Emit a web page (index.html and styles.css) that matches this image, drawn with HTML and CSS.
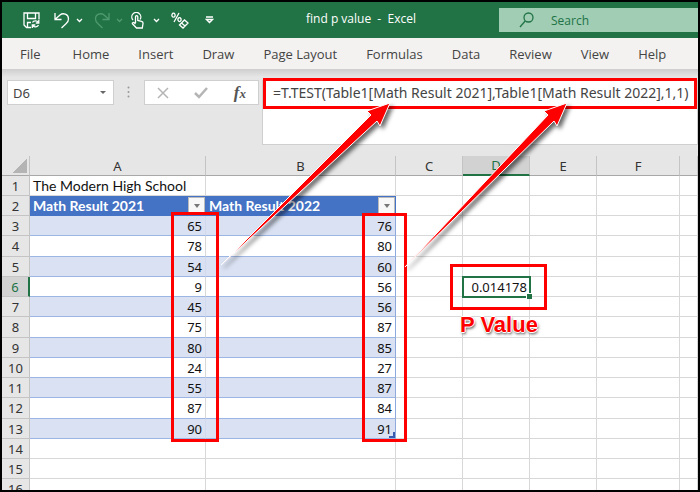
FILE: index.html
```html
<!DOCTYPE html>
<html lang="en">
  <head>
    <meta charset="UTF-8" />
    <meta name="viewport" content="width=device-width, initial-scale=1.0" />
    <title>find p value - Excel</title>
    <link rel="stylesheet" href="styles.css">
  </head>
  <body>
    <div class="window">
      <header class="titlebar">
        <div class="quick">
          <button aria-label="Save">
            <svg width="17" height="17" viewBox="0 0 17 17"><path d="M8 15.500H3.500L1 13V1H16V7.500M4.500 1V6.500H12.500V1M4.500 15V10.500H8M9.500 10.500C10.500 8.500 14 8.300 15.500 10.500M15.800 8V11H12.800M15.500 13C14.500 15.200 11.500 15.600 9.600 13.500M9.300 16V13H12.300"/></svg>
          </button>
          <button class="split" aria-label="Undo">
            <svg width="16" height="17" viewBox="0 0 16 17"><path d="M1 1V7.500H7.500M1.200 7.300L6 3C9 .5 14.500 2 14.500 7C14.500 9 13.500 10.500 12 11.800L7.500 16"/></svg>
            <svg width="7" height="5" viewBox="0 0 7 5"><path d="M1 1L3.500 3.500L6 1"/></svg>
          </button>
          <button class="split off" aria-label="Redo">
            <svg width="16" height="17" viewBox="0 0 16 17"><path d="M15 1V7.500H8.500M14.800 7.300L10 3C7 .5 1.500 2 1.500 7C1.500 9 2.500 10.500 4 11.800L8.500 16"/></svg>
            <svg width="7" height="5" viewBox="0 0 7 5"><path d="M1 1L3.500 3.500L6 1"/></svg>
          </button>
          <button class="split touch" aria-label="Touch mode">
            <svg width="13" height="17" viewBox="0 0 13 17"><path d="M2 8A4.500 4.500 0 1 1 9 7.500M4.500 11V4.800C4.500 3.300 6.800 3.300 6.800 4.800V8.500L10.500 9.300C11.800 9.600 12.200 10.300 12 11.500L11.300 16H5.500L1.500 11.800C1 11 2.200 10 3 10.600L4.500 12"/></svg>
            <svg width="7" height="5" viewBox="0 0 7 5"><path d="M1 1L3.500 3.500L6 1"/></svg>
          </button>
          <button class="percent" aria-label="Clear format">
            <svg width="18" height="17" viewBox="0 0 18 17"><path d="M8 1L3 10M2.500 1.200A1.600 2 0 1 0 2.510 1.200M8.500 5.600A1.600 2 0 1 0 8.510 5.600M8.500 13L13.500 8L17 11L12 16ZM10.500 11L14 14"/></svg>
          </button>
          <button class="more" aria-label="Customize">
            <svg width="9" height="8" viewBox="0 0 9 8"><path d="M1 1H8M1.500 3.500H7.500L4.500 6.500Z"/></svg>
          </button>
        </div>
        <div class="title">find p value&nbsp; -&nbsp; Excel</div>
        <label class="search">
          <svg width="15" height="16" viewBox="0 0 15 16"><circle cx="9.500" cy="5.500" r="4.500"/><path d="M6.200 9L1 15"/></svg>
          <input type="text" placeholder="Search" aria-label="Search" />
        </label>
      </header>

      <nav class="tabs">
        <a class="file" href="#">File</a>
        <a href="#">Home</a>
        <a href="#">Insert</a>
        <a href="#">Draw</a>
        <a href="#">Page Layout</a>
        <a href="#">Formulas</a>
        <a href="#">Data</a>
        <a href="#">Review</a>
        <a href="#">View</a>
        <a href="#">Help</a>
      </nav>

      <div class="formula-bar">
        <div class="name-box">
          <input type="text" value="D6" aria-label="Name box" />
          <span class="caret"></span>
        </div>
        <svg class="dots" width="3" height="12" viewBox="0 0 3 12"><circle cx="1.500" cy="1.500" r="1"/><circle cx="1.500" cy="6" r="1"/><circle cx="1.500" cy="10.500" r="1"/></svg>
        <div class="fx-buttons">
          <button aria-label="Cancel"><svg width="12" height="12" viewBox="0 0 12 12"><path d="M1 1L11 11M11 1L1 11"/></svg></button>
          <button aria-label="Enter"><svg class="tick" width="14" height="12" viewBox="0 0 14 12"><path d="M1 6L5 10L13 1"/></svg></button>
          <button class="fx" aria-label="Insert function">f<small>x</small></button>
        </div>
        <textarea class="formula" aria-label="Formula" spellcheck="false">=T.TEST(Table1[Math Result 2021],Table1[Math Result 2022],1,1)</textarea>
      </div>

      <table class="sheet">
        <colgroup>
          <col class="w-num"><col class="w-a"><col class="w-b"><col class="w-c"><col class="w-c"><col class="w-c"><col class="w-f"><col>
        </colgroup>
        <thead>
          <tr><th class="corner"></th><th>A</th><th>B</th><th>C</th><th class="active">D</th><th>E</th><th>F</th><th></th></tr>
        </thead>
        <tbody>
          <tr><th>1</th><td class="text">The Modern High School</td><td></td><td></td><td></td><td></td><td></td><td></td></tr>
          <tr class="head"><th>2</th><td><div>Math Result 2021<button aria-label="Filter 2021"></button></div></td><td><div>Math Result 2022<button aria-label="Filter 2022"></button></div></td><td></td><td></td><td></td><td></td><td></td></tr>
          <tr class="data band"><th>3</th><td>65</td><td>76</td><td></td><td></td><td></td><td></td><td></td></tr>
          <tr class="data"><th>4</th><td>78</td><td>80</td><td></td><td></td><td></td><td></td><td></td></tr>
          <tr class="data band"><th>5</th><td>54</td><td>60</td><td></td><td></td><td></td><td></td><td></td></tr>
          <tr class="data"><th class="active">6</th><td>9</td><td>56</td><td></td><td class="selected">0.014178</td><td></td><td></td><td></td></tr>
          <tr class="data band"><th>7</th><td>45</td><td>56</td><td></td><td></td><td></td><td></td><td></td></tr>
          <tr class="data"><th>8</th><td>75</td><td>87</td><td></td><td></td><td></td><td></td><td></td></tr>
          <tr class="data band"><th>9</th><td>80</td><td>85</td><td></td><td></td><td></td><td></td><td></td></tr>
          <tr class="data"><th>10</th><td>24</td><td>27</td><td></td><td></td><td></td><td></td><td></td></tr>
          <tr class="data band"><th>11</th><td>55</td><td>87</td><td></td><td></td><td></td><td></td><td></td></tr>
          <tr class="data"><th>12</th><td>87</td><td>84</td><td></td><td></td><td></td><td></td><td></td></tr>
          <tr class="data band"><th>13</th><td>90</td><td class="table-end">91</td><td></td><td></td><td></td><td></td><td></td></tr>
          <tr><th>14</th><td></td><td></td><td></td><td></td><td></td><td></td><td></td></tr>
          <tr><th>15</th><td></td><td></td><td></td><td></td><td></td><td></td><td></td></tr>
          <tr><th>16</th><td></td><td></td><td></td><td></td><td></td><td></td><td></td></tr>
        </tbody>
      </table>
    </div>

    <!-- red callouts over the sheet -->
    <div class="mark mark-formula"></div>
    <div class="mark mark-a"></div>
    <div class="mark mark-b"></div>
    <div class="mark mark-p"></div>
    <div class="p-label">P Value</div>
    <svg class="arrows" width="700" height="300" viewBox="0 0 700 300">
      <path d="M221 265L371 115L367 111L390 103L380 126L377 121Z"/>
      <path d="M405 267L548 115L544 111L567 103L557 126L554 121Z"/>
    </svg>
  </body>
</html>
```

FILE: styles.css
```css
* {
  box-sizing: border-box;
}
body {
  margin: 0;
  background: #000;
  font-family: "Open Sans", sans-serif;
  position: relative;
  height: 100vh;
  overflow: hidden;
}
button {
  border: none;
  background: none;
  padding: 0;
}
input,
textarea {
  border: none;
  outline: none;
  padding: 0;
  background: transparent;
}
svg {
  fill: none;
  stroke: currentColor;
}
.window {
  height: 100vh;
  border: 2px solid #000;
  background: #fff;
  overflow: hidden;
}

/* title bar */
.titlebar {
  display: flex;
  height: 36px;
  background: #217346;
  color: #fff;
}
.quick {
  display: flex;
  align-items: center;
  width: 304px;
  padding-left: 21px;
}
.quick button {
  display: flex;
  align-items: center;
  color: #fff;
  margin-right: 14px;
}
.quick svg {
  stroke-width: 1.3;
}
.quick .split {
  gap: 6px;
  margin-right: 11px;
}
.quick .off {
  color: #4f9a70;
  margin-right: 8px;
}
.quick .touch {
  gap: 9px;
}
.quick .percent {
  margin-right: 16px;
}
.title {
  width: 193px;
  font-size: 12px;
  line-height: 34px;
  white-space: nowrap;
}
.search {
  flex: 1;
  display: flex;
  align-items: center;
  gap: 17px;
  height: 24px;
  margin-top: 6px;
  padding-left: 20px;
  background: #a0cdb3;
  color: #217346;
}
.search svg {
  stroke-width: 1.3;
}
.search input {
  width: 100px;
  font: 12px "Open Sans", sans-serif;
}
.search input::placeholder {
  color: #217346;
  opacity: 1;
}

/* ribbon tabs */
.tabs {
  display: flex;
  gap: 29px;
  height: 31px;
  padding-left: 18px;
  background: #f3f2f1;
}
.tabs a {
  color: #444;
  font-size: 13px;
  line-height: 32px;
  text-decoration: none;
  white-space: nowrap;
}
.tabs .file {
  padding-right: 3px;
}

/* formula bar */
.formula-bar {
  display: flex;
  align-items: flex-start;
  height: 87px;
  padding: 11px 0 0 5px;
  background: linear-gradient(#cecece, #e6e6e6 8px);
}
.name-box,
.fx-buttons {
  display: flex;
  align-items: center;
  height: 25px;
  border: 1px solid #cfcfcf;
  background: #fff;
}
.name-box {
  width: 107px;
  padding: 0 7px 0 5px;
}
.name-box input {
  flex: 1;
  min-width: 0;
  color: #444;
  font: 13px "Noto Sans", sans-serif;
}
.caret {
  border: 3px solid transparent;
  border-top-color: #666;
  border-bottom: none;
}
.dots {
  margin: 6px 14px 0 13px;
  fill: #999;
  stroke: none;
}
.fx-buttons {
  width: 115px;
  justify-content: space-between;
  padding: 0 12px;
  color: #b5b5b5;
}
.fx-buttons button {
  display: flex;
  color: inherit;
}
.fx-buttons svg {
  stroke-width: 1.5;
}
.fx-buttons .tick {
  stroke-width: 2.5;
}
.fx-buttons .fx {
  align-items: baseline;
  color: #555;
  font: italic bold 17px "Liberation Serif", serif;
}
.fx small {
  font-size: 13px;
}
.formula {
  flex: 1;
  height: 65px;
  margin-left: 3px;
  padding: 2px 0 0 10px;
  border: 1px solid #cfcfcf;
  background: #fff;
  color: #444;
  font: 14px/20px "Noto Sans", sans-serif;
  resize: none;
  white-space: nowrap;
  overflow: hidden;
}

/* sheet */
.sheet {
  width: 100%;
  table-layout: fixed;
  border-collapse: separate;
  border-spacing: 0;
  font: 13px/18px "Noto Sans", sans-serif;
  color: #111;
}
.w-num {
  width: 28px;
}
.w-a {
  width: 176px;
}
.w-b {
  width: 190px;
}
.w-c {
  width: 67px;
}
.w-f {
  width: 83px;
}
.sheet th,
.sheet td {
  height: 20px;
  padding: 0 3px;
  border-right: 1px solid #d8d8d8;
  border-bottom: 1px solid #d8d8d8;
  white-space: nowrap;
}
.sheet tr:nth-child(4n) > * {
  height: 21px;
}
.sheet th {
  padding: 0;
  background: #e6e6e6;
  border-color: #c4c4c4;
  color: #333;
  font-weight: normal;
}
.sheet thead th {
  border-bottom-color: #a8a8a8;
}
.sheet .corner {
  background: linear-gradient(135deg, transparent 50%, #b4b4b4 50%) 11px 3px / 14px 14px no-repeat #e6e6e6;
}
.sheet th.active {
  background: #d2d2d2;
  color: #217346;
}
.sheet thead th.active {
  border-bottom: 2px solid #217346;
}
.sheet tbody th.active {
  border-right: 2px solid #217346;
}
.sheet .text,
.head td {
  font-family: Lato, sans-serif;
  font-size: 14px;
}
.data td {
  text-align: right;
}
.data td:nth-child(2),
.data td:nth-child(3) {
  border-bottom-color: #9db5e2;
}
.band td:nth-child(2),
.band td:nth-child(3) {
  background: #d9e1f2;
}
.data td:nth-child(3) {
  border-right-color: #8ea9db;
}
.band td:nth-child(2) {
  border-right-color: #d0d9ed;
}
.head td:nth-child(2),
.head td:nth-child(3) {
  padding-right: 0;
  background: #4472c4;
  border-color: #4472c4;
  color: #fff;
  font-weight: bold;
}
.head div {
  display: flex;
  justify-content: space-between;
  align-items: center;
}
.head button {
  display: flex;
  align-items: center;
  justify-content: center;
  width: 17px;
  height: 17px;
  border: 1px solid #bbb;
  background: #f8f8f8;
}
.head button::after {
  content: "";
  border: 3px solid transparent;
  border-top: 4px solid #777;
  border-bottom: none;
}
.sheet .selected {
  border: none;
  outline: 2px solid #217346;
  outline-offset: -1px;
  position: relative;
}
.selected::after {
  content: "";
  position: absolute;
  right: -2px;
  bottom: -2px;
  width: 5px;
  height: 5px;
  background: #217346;
  border: 1px solid #fff;
  border-width: 1px 0 0 1px;
}
.table-end {
  position: relative;
}
.table-end::after {
  content: "";
  position: absolute;
  right: 0;
  bottom: 0;
  width: 4px;
  height: 4px;
  border: 2px solid #3a5cb0;
  border-top: none;
  border-left: none;
}

/* callouts */
.mark {
  position: absolute;
  border: 3px solid #fe0000;
}
.mark-formula {
  left: 263px;
  top: 78px;
  width: 434px;
  height: 31px;
}
.mark-a {
  left: 171px;
  top: 212px;
  width: 48px;
  height: 230px;
}
.mark-b {
  left: 362px;
  top: 213px;
  width: 45px;
  height: 229px;
}
.mark-p {
  left: 450px;
  top: 264px;
  width: 97px;
  height: 46px;
}
.p-label {
  position: absolute;
  left: 460px;
  top: 313px;
  color: #fe0000;
  font: bold 22px/24px "Liberation Sans", sans-serif;
  text-shadow: 1px 0 #fff, -1px 0 #fff, 0 1px #fff, 0 -1px #fff, 1px 2px 3px #444;
}
.arrows {
  position: absolute;
  left: 0;
  top: 0;
  pointer-events: none;
  filter: drop-shadow(3px 3px 2px rgba(0, 0, 0, 0.6));
}
.arrows path {
  fill: #fe0000;
  stroke: #fff;
  stroke-width: 1;
}
```
